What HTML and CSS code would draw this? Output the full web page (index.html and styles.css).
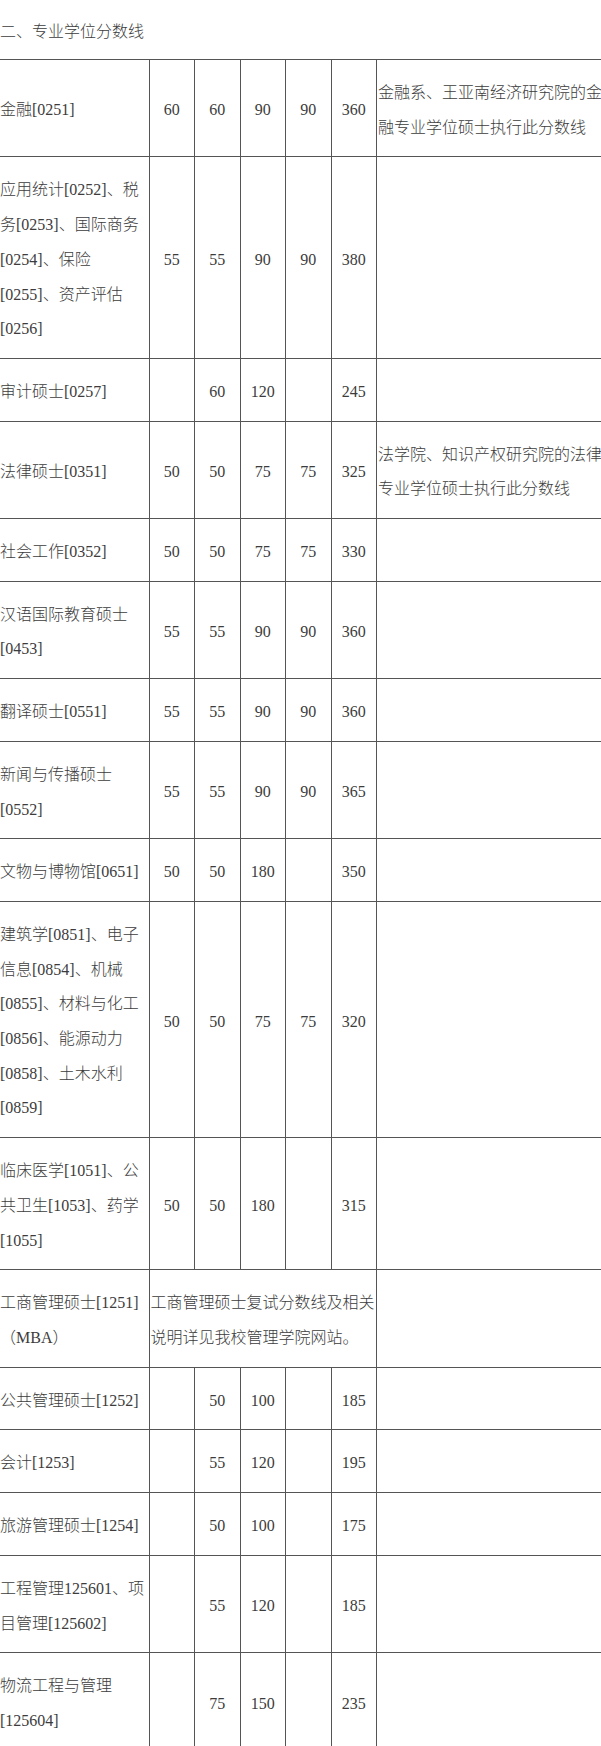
FILE: index.html
```html
<!DOCTYPE html>
<html lang="zh-CN">
<head>
<meta charset="utf-8">
<title>专业学位分数线</title>
<link rel="stylesheet" href="styles.css">
</head>
<body>
<div class="wrap">
  <p class="title">二、专业学位分数线</p>
  <table class="scores">
    <colgroup>
      <col class="c-name">
      <col class="c-num"><col class="c-num"><col class="c-num"><col class="c-num"><col class="c-num">
      <col class="c-note">
    </colgroup>
    <tbody>
      <tr><td>金融[0251]</td><td class="num">60</td><td class="num">60</td><td class="num">90</td><td class="num">90</td><td class="num">360</td><td>金融系、王亚南经济研究院的金融专业学位硕士执行此分数线</td></tr>
      <tr><td>应用统计[0252]、税务[0253]、国际商务[0254]、保险[0255]、资产评估[0256]</td><td class="num">55</td><td class="num">55</td><td class="num">90</td><td class="num">90</td><td class="num">380</td><td></td></tr>
      <tr><td>审计硕士[0257]</td><td class="num"></td><td class="num">60</td><td class="num">120</td><td class="num"></td><td class="num">245</td><td></td></tr>
      <tr><td>法律硕士[0351]</td><td class="num">50</td><td class="num">50</td><td class="num">75</td><td class="num">75</td><td class="num">325</td><td>法学院、知识产权研究院的法律专业学位硕士执行此分数线</td></tr>
      <tr><td>社会工作[0352]</td><td class="num">50</td><td class="num">50</td><td class="num">75</td><td class="num">75</td><td class="num">330</td><td></td></tr>
      <tr><td>汉语国际教育硕士[0453]</td><td class="num">55</td><td class="num">55</td><td class="num">90</td><td class="num">90</td><td class="num">360</td><td></td></tr>
      <tr><td>翻译硕士[0551]</td><td class="num">55</td><td class="num">55</td><td class="num">90</td><td class="num">90</td><td class="num">360</td><td></td></tr>
      <tr><td>新闻与传播硕士[0552]</td><td class="num">55</td><td class="num">55</td><td class="num">90</td><td class="num">90</td><td class="num">365</td><td></td></tr>
      <tr><td>文物与博物馆[0651]</td><td class="num">50</td><td class="num">50</td><td class="num">180</td><td class="num"></td><td class="num">350</td><td></td></tr>
      <tr><td>建筑学[0851]、电子信息[0854]、机械[0855]、材料与化工[0856]、能源动力[0858]、土木水利[0859]</td><td class="num">50</td><td class="num">50</td><td class="num">75</td><td class="num">75</td><td class="num">320</td><td></td></tr>
      <tr><td>临床医学[1051]、公共卫生[1053]、药学[1055]</td><td class="num">50</td><td class="num">50</td><td class="num">180</td><td class="num"></td><td class="num">315</td><td></td></tr>
      <tr><td>工商管理硕士[1251]（MBA）</td><td class="merged" colspan="5">工商管理硕士复试分数线及相关说明详见我校管理学院网站。</td><td></td></tr>
      <tr><td>公共管理硕士[1252]</td><td class="num"></td><td class="num">50</td><td class="num">100</td><td class="num"></td><td class="num">185</td><td></td></tr>
      <tr><td>会计[1253]</td><td class="num"></td><td class="num">55</td><td class="num">120</td><td class="num"></td><td class="num">195</td><td></td></tr>
      <tr><td>旅游管理硕士[1254]</td><td class="num"></td><td class="num">50</td><td class="num">100</td><td class="num"></td><td class="num">175</td><td></td></tr>
      <tr><td>工程管理125601、项目管理[125602]</td><td class="num"></td><td class="num">55</td><td class="num">120</td><td class="num"></td><td class="num">185</td><td></td></tr>
      <tr><td>物流工程与管理[125604]</td><td class="num"></td><td class="num">75</td><td class="num">150</td><td class="num"></td><td class="num">235</td><td></td></tr>
    </tbody>
  </table>
</div>
</body>
</html>
```

FILE: styles.css
```css
html, body {
  margin: 0;
  padding: 0;
  background: #ffffff;
}

body {
  font-family: "Liberation Serif", "Noto Sans CJK SC", serif;
  font-size: 16px;
  font-weight: 300;
  color: #3c3c3c;
}

.wrap {
  width: 601px;
  overflow: hidden;
}

.title {
  margin: 0 0 15px;
  padding: 20px 0 0;
  line-height: 24px;
}

.scores {
  border-collapse: collapse;
  table-layout: fixed;
  width: 618px;
  margin-left: -2px;
}

.c-name { width: 150.5px; }
.c-num { width: 45.5px; }
.c-note { width: 240px; }

.scores td {
  border: 1px solid #555555;
  padding: 16px 1px 11px;
  line-height: 34.7px;
  vertical-align: middle;
  text-align: left;
}

.scores td.num {
  text-align: center;
}

.scores td.merged {
  padding-right: 0;
}
```
